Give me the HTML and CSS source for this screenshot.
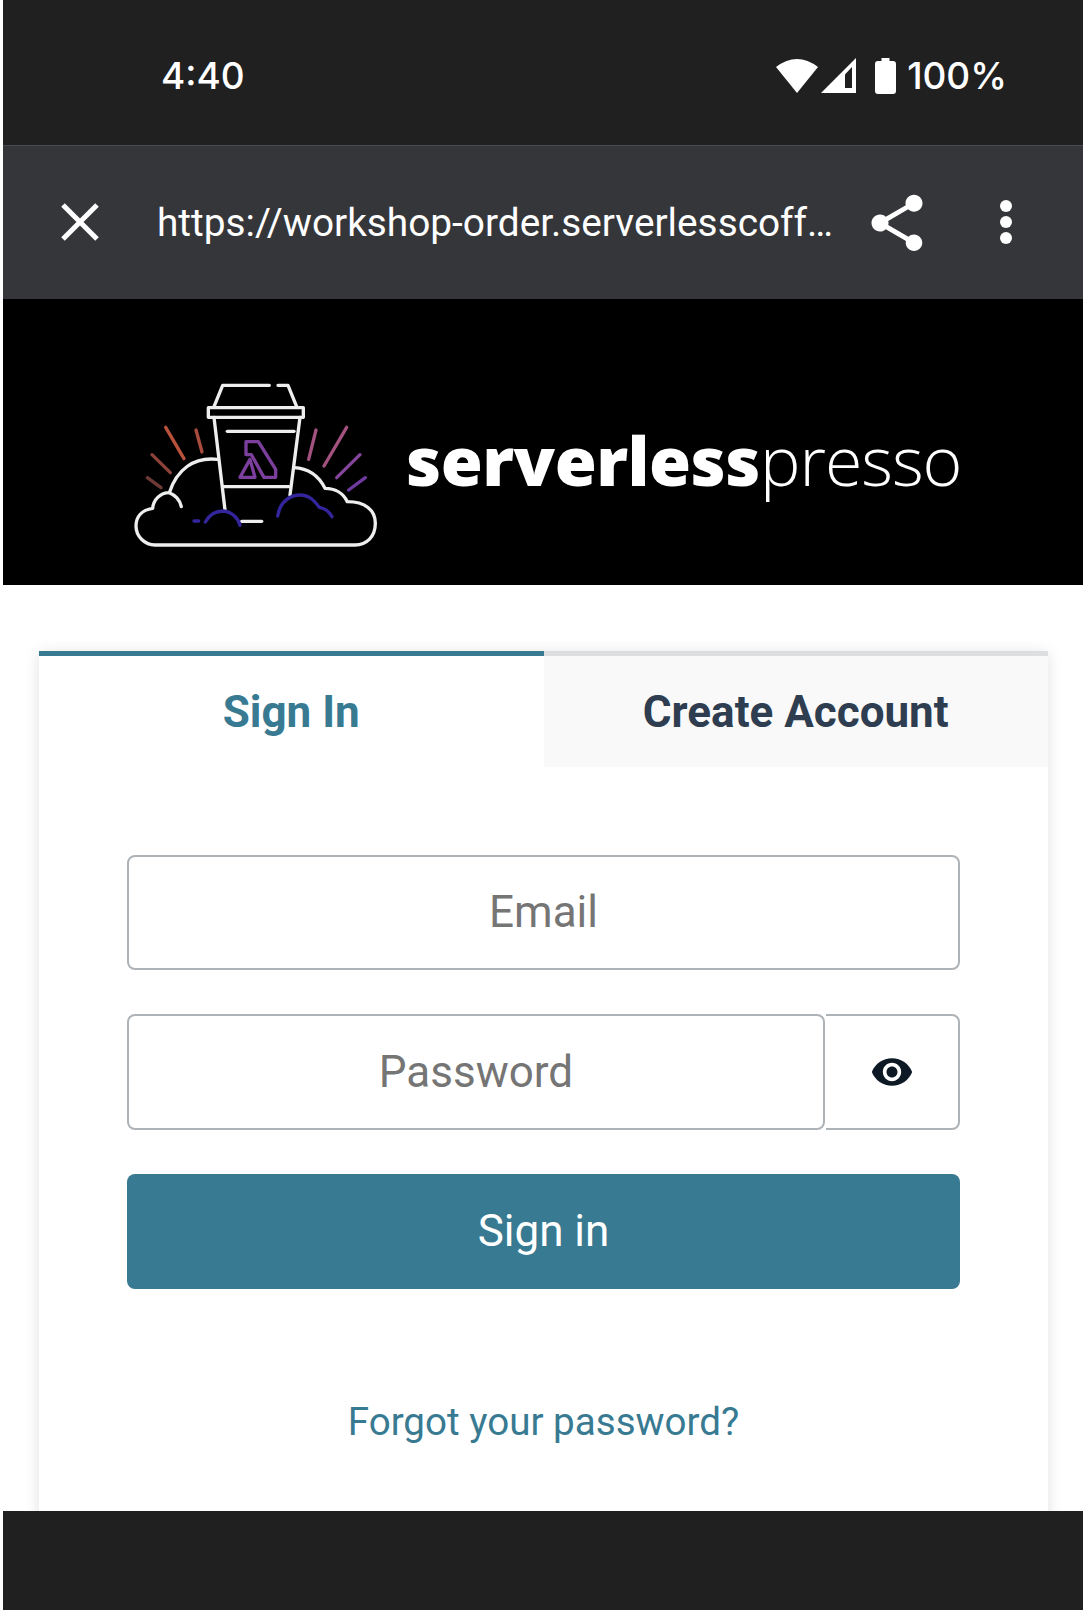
FILE: index.html
```html
<!DOCTYPE html>
<html>

<head lang="en">
    <meta charset="UTF-8">
    <meta name="viewport" content="width=device-width, initial-scale=1.0">
    <title>Serverlesspresso</title>
    <link rel="stylesheet" href="styles.css">
</head>

<body>
    <div class="phone">
        <!-- status bar -->
        <div class="status-bar">
            <span class="clock">4:40</span>
            <div class="status-icons">
                <svg class="wifi" width="42" height="34" viewBox="0 0 42 34">
                    <path d="M21 34 L0 8 Q21 -8 42 8 Z" fill="#fff" />
                </svg>
                <svg class="signal" width="35" height="35" viewBox="0 0 35 35">
                    <path d="M35 0 V35 H0 Z" fill="#fff" />
                    <path d="M31 9 V30 H24 V16.5 Z" fill="#202020" />
                </svg>
                <svg class="battery" width="21" height="36" viewBox="0 0 21 36">
                    <path d="M6.5 0 H14.5 V3 H18 Q21 3 21 6 V33 Q21 36 18 36 H3 Q0 36 0 33 V6 Q0 3 3 3 H6.5 Z" fill="#fff" />
                </svg>
                <span class="percent">100%</span>
            </div>
        </div>

        <!-- browser toolbar -->
        <div class="toolbar">
            <svg class="close-icon" width="38" height="38" viewBox="0 0 38 38">
                <path d="M2 2 L36 36 M36 2 L2 36" stroke="#fff" stroke-width="5" fill="none" />
            </svg>
            <span class="url">https://workshop-order.serverlesscoff…</span>
            <svg class="share-icon" width="68" height="68" viewBox="0 0 24 24">
                <path d="M18 16.08c-.76 0-1.44.3-1.96.77L8.91 12.7c.05-.23.09-.46.09-.7s-.04-.47-.09-.7l7.05-4.11c.54.5 1.25.81 2.04.81 1.66 0 3-1.34 3-3s-1.34-3-3-3-3 1.34-3 3c0 .24.04.47.09.7L8.04 9.81C7.5 9.31 6.79 9 6 9c-1.66 0-3 1.34-3 3s1.34 3 3 3c.79 0 1.5-.31 2.04-.81l7.12 4.16c-.05.21-.08.43-.08.65 0 1.61 1.31 2.92 2.92 2.92s2.92-1.31 2.92-2.92-1.31-2.92-2.92-2.92z" fill="#fff" />
            </svg>
            <div class="dots">
                <span></span>
                <span></span>
                <span></span>
            </div>
        </div>

        <!-- logo banner -->
        <div class="banner">
            <svg class="logo" width="290" height="200" viewBox="0 0 870 600" fill="none" stroke-linecap="round" stroke-linejoin="round">
                <g stroke="#eee" stroke-width="10">
                    <!-- lid -->
                    <path d="M312 140 L338 76 H478 M504 76 H534 L560 140" />
                    <path d="M295 143 H580 V172 H295 Z" />
                    <!-- cup -->
                    <path d="M312 172 L345 450 M570 172 L540 405" />
                    <path d="M352 214 H552" />
                    <path d="M338 380 H536" />
                    <path d="M395 484 H455" />
                    <!-- cloud -->
                    <path d="M322 298 C250 290 200 330 178 398 C150 398 130 420 128 445 C95 450 78 470 78 498 C78 530 105 555 135 555 H735 C770 555 796 530 796 490 C796 450 765 425 712 425 C700 400 675 385 645 385 C625 345 590 325 552 323" />
                    <path d="M178 398 C195 405 210 420 214 440" />
                </g>
                <!-- lambda -->
                <g stroke="#7d3f9e" stroke-width="10">
                    <path d="M408 245 H445 L497 328 V352 H462 L424 284 H408 Z" />
                    <path d="M420 298 L390 352 H435 Z" />
                </g>
                <!-- blue cloud lines -->
                <g stroke="#33259c" stroke-width="10">
                    <path d="M286 486 C300 460 320 453 340 453 C365 455 385 475 390 496" />
                    <path d="M252 483 H266" />
                    <path d="M503 468 C510 425 540 405 570 405 C600 405 615 425 628 442 C645 445 658 455 666 470" />
                </g>
                <!-- rays -->
                <g stroke-width="10">
                    <path d="M167 202 L222 296" stroke="#b9523a" />
                    <path d="M258 210 L276 276" stroke="#a94c3e" />
                    <path d="M126 284 L181 338" stroke="#8d4238" />
                    <path d="M112 353 L153 383" stroke="#6f3a35" />
                    <path d="M618 210 L596 298" stroke="#a3527f" />
                    <path d="M710 202 L642 318" stroke="#a3527f" />
                    <path d="M750 284 L680 353" stroke="#84459b" />
                    <path d="M766 353 L716 390" stroke="#6f3aa0" />
                </g>
            </svg>
            <div class="wordmark"><b>serverless</b><span>presso</span></div>
        </div>

        <!-- sign in card -->
        <div class="content">
            <div class="card">
                <div class="tabs">
                    <div class="tab active">Sign In</div>
                    <div class="tab">Create Account</div>
                </div>
                <form class="form">
                    <div class="field">Email</div>
                    <div class="password-row">
                        <div class="field password">Password</div>
                        <div class="eye-btn">
                            <svg width="44" height="44" viewBox="0 0 24 24">
                                <path d="M12 4.5C7 4.5 2.73 7.61 1 12c1.73 4.39 6 7.5 11 7.5s9.27-3.11 11-7.5c-1.73-4.39-6-7.5-11-7.5zM12 17c-2.76 0-5-2.24-5-5s2.24-5 5-5 5 2.24 5 5-2.24 5-5 5zm0-8c-1.66 0-3 1.34-3 3s1.34 3 3 3 3-1.34 3-3-1.34-3-3-3z" fill="#0d1a26" />
                            </svg>
                        </div>
                    </div>
                    <div class="submit">Sign in</div>
                </form>
                <a class="forgot" href="#">Forgot your password?</a>
            </div>
        </div>

        <!-- nav bar -->
        <div class="nav-bar"></div>
    </div>
</body>

</html>
```

FILE: styles.css
```css
* {
    margin: 0;
    padding: 0;
    box-sizing: border-box;
}

body {
    background-color: #fff;
    font-family: Roboto, "Liberation Sans", sans-serif;
}

.phone {
    height: 1610px;
    padding-left: 3px;
    display: flex;
    flex-direction: column;
    overflow: hidden;
}

.status-bar {
    height: 145px;
    flex-shrink: 0;
    background-color: #202020;
    color: #fff;
    display: flex;
    align-items: center;
    justify-content: space-between;
    padding: 6px 76px 0 158px;
}

.clock {
    font-family: Inter, sans-serif;
    font-size: 37px;
    font-weight: 500;
}

.status-icons {
    display: flex;
    align-items: center;
}

.wifi {
    margin-right: 3px;
}

.battery {
    margin: 0 11px 0 19px;
}

.percent {
    font-family: Inter, sans-serif;
    font-size: 37px;
    font-weight: 500;
}

.toolbar {
    height: 154px;
    flex-shrink: 0;
    background-color: #35363a;
    border-top: 1px solid #4a4b4e;
    display: flex;
    align-items: center;
    padding-left: 58px;
}

.close-icon {
    margin-bottom: 1px;
}

.url {
    width: 675px;
    margin-left: 58px;
    color: #fff;
    font-size: 38.8px;
    white-space: nowrap;
}

.share-icon {
    margin-left: 31px;
}

.dots {
    margin-left: 69px;
    margin-bottom: 2px;
    display: flex;
    flex-direction: column;
    gap: 4px;
}

.dots span {
    width: 12px;
    height: 12px;
    border-radius: 50%;
    background-color: #fff;
}

.banner {
    height: 286px;
    flex-shrink: 0;
    background-color: #000;
    display: flex;
    align-items: center;
    padding: 36px 0 0 107px;
}

.logo {
    filter: blur(0.7px);
}

.wordmark {
    margin-left: 6px;
    color: #fff;
    font-family: "Open Sans", sans-serif;
    font-size: 68px;
    line-height: 1;
    white-space: nowrap;
    filter: blur(0.5px);
}

.wordmark b {
    font-weight: 800;
    letter-spacing: -0.5px;
}

.wordmark span {
    font-weight: 300;
    letter-spacing: -1px;
}

.content {
    flex: 1;
    min-height: 0;
    padding: 66px 35px 0 36px;
    overflow: hidden;
}

.card {
    height: 900px;
    background-color: #fff;
    box-shadow: 0 2px 14px rgba(0, 0, 0, 0.12);
}

.tabs {
    display: flex;
}

.tab {
    flex: 1;
    height: 116px;
    background-color: #f9f9f9;
    border-top: 5px solid #dcdee0;
    color: #2e3d50;
    font-size: 44px;
    font-weight: 700;
    display: flex;
    align-items: center;
    justify-content: center;
}

.tab.active {
    background-color: #fff;
    border-top-color: #387a91;
    color: #387a91;
}

.form {
    padding: 88px 88px 0;
    display: flex;
    flex-direction: column;
    gap: 44px;
}

.field {
    height: 115px;
    padding-bottom: 2px;
    border: 2px solid #aeb3b7;
    border-radius: 8px;
    color: #757575;
    font-size: 44px;
    display: flex;
    align-items: center;
    justify-content: center;
}

.password-row {
    height: 116px;
    display: flex;
}

.password {
    flex: 1;
    height: 116px;
    padding-bottom: 0;
}

.eye-btn {
    width: 134px;
    margin-left: 1px;
    border: 2px solid #aeb3b7;
    border-left: none;
    border-radius: 0 8px 8px 0;
    display: flex;
    align-items: center;
    justify-content: center;
}

.submit {
    height: 115px;
    padding-bottom: 1px;
    border-radius: 8px;
    background-color: #387a91;
    color: #fff;
    font-size: 44px;
    display: flex;
    align-items: center;
    justify-content: center;
}

.forgot {
    display: block;
    margin-top: 110px;
    text-align: center;
    color: #387a91;
    font-size: 38.6px;
    text-decoration: none;
}

.nav-bar {
    height: 99px;
    flex-shrink: 0;
    background-color: #202020;
}
```
